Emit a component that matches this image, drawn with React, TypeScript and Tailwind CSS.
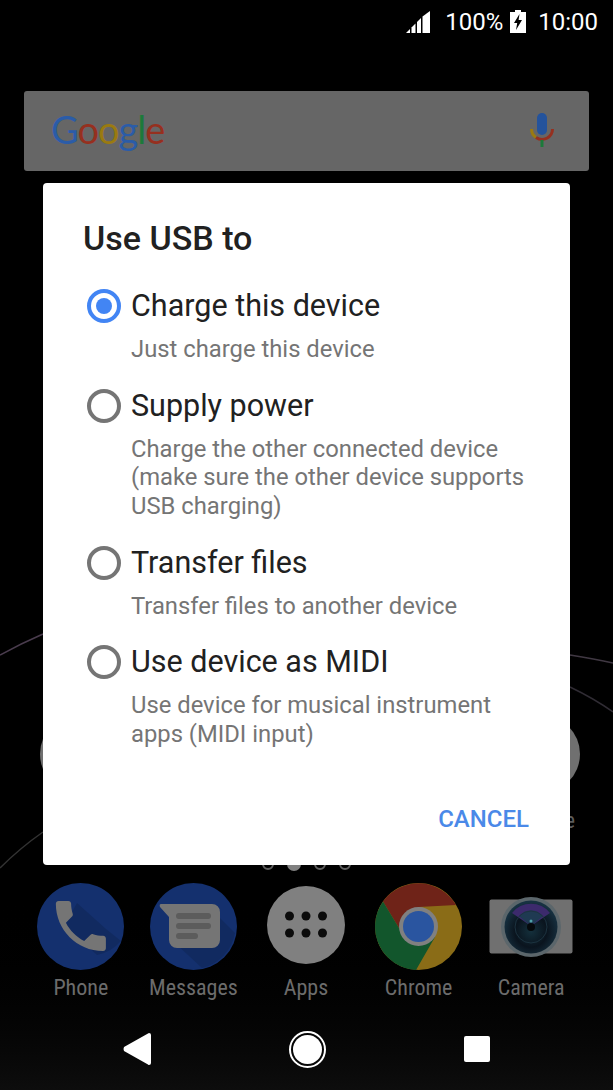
import type { ReactNode } from "react";

const options = [
  { title: "Charge this device", desc: ["Just charge this device"], checked: true },
  {
    title: "Supply power",
    desc: ["Charge the other connected device", "(make sure the other device supports", "USB charging)"],
  },
  { title: "Transfer files", desc: ["Transfer files to another device"] },
  { title: "Use device as MIDI", desc: ["Use device for musical instrument", "apps (MIDI input)"] },
];

const Signal = () => (
  <svg width="24" height="22" viewBox="0 0 24 22" fill="#fff">
    <path d="M0 22 L4 18 V22 Z" />
    <path d="M5.5 16.5 L9.5 12.5 V22 H5.5 Z" />
    <path d="M11 11 L15 7 V22 H11 Z" />
    <path d="M16.5 5.5 L24 0 V22 H16.5 Z" />
  </svg>
);

const Battery = () => (
  <svg width="16" height="23" viewBox="0 0 16 23">
    <path d="M5 0 H11 V2 H16 V23 H0 V2 H5 Z" fill="#fff" />
    <path d="M9.5 4 L4 13 H7.2 L6 20 L12 10 H8.6 Z" fill="#000" />
  </svg>
);

const StatusBar = () => (
  <div className="flex h-[43px] items-center justify-end pr-[15px] text-[24px] leading-none text-white">
    <Signal />
    <span className="ml-[15px]">100%</span>
    <span className="ml-[7px]">
      <Battery />
    </span>
    <span className="ml-[12px]">10:00</span>
  </div>
);

const SearchBar = () => (
  <div className="mx-[24px] mt-[48px] flex h-[80px] shrink-0 items-center justify-between rounded-[3px] bg-[#666666] pl-[27px] pr-[35px]">
    <span className="-mt-[4px] font-['Lato',sans-serif] text-[38px] leading-none tracking-[-1px]">
      <span className="text-[#2b5ca8]">G</span>
      <span className="text-[#96301f]">o</span>
      <span className="text-[#9a7a10]">o</span>
      <span className="text-[#2b5ca8]">g</span>
      <span className="text-[#1c7a3a]">l</span>
      <span className="text-[#96301f]">e</span>
    </span>
    <svg className="-mt-[2px]" width="24" height="34" viewBox="0 0 24 34" fill="none">
      <rect x="7" y="0" width="10" height="22" rx="5" fill="#24539c" />
      <path d="M1.5 16 A10.5 10.5 0 0 0 6 24.500" stroke="#9a7a10" strokeWidth="3" />
      <path d="M6 24.500 A10.5 10.5 0 0 0 22.500 16" stroke="#96301f" strokeWidth="3" />
      <rect x="10.500" y="27" width="3" height="7" fill="#1c7a3a" />
    </svg>
  </div>
);

const Dock = ({ children, label }: { children: ReactNode; label: string }) => (
  <div className="flex flex-col items-center">
    <div className="flex h-[87px] items-center justify-center">{children}</div>
    <span className="mt-[3px] text-[22px] leading-[30px] font-stretch-condensed text-[#6c6c6c]">{label}</span>
  </div>
);

const PhoneIcon = () => (
  <svg width="87" height="87" viewBox="0 0 87 87">
    <circle cx="43.500" cy="43.500" r="43.500" fill="#14306e" />
    <path d="M28 42 L60 72 A43.500 43.500 0 0 0 84 58 L69 46 L40 20 Z" fill="#112a60" />
    <g transform="translate(10.500 9.700) scale(2.780)" fill="#757575">
      <path d="M6.620 10.790c1.440 2.830 3.760 5.140 6.590 6.590l2.200-2.200c.27-.27.67-.36 1.020-.24 1.120.37 2.330.57 3.570.57.55 0 1 .45 1 1V20c0 .55-.45 1-1 1-9.390 0-17-7.610-17-17 0-.55.45-1 1-1h3.500c.55 0 1 .45 1 1 0 1.250.2 2.450.57 3.570.11.35.03.74-.25 1.020l-2.200 2.200z" />
    </g>
  </svg>
);

const MessagesIcon = () => (
  <svg width="87" height="87" viewBox="0 0 87 87">
    <circle cx="43.500" cy="43.500" r="43.500" fill="#14306e" />
    <path d="M25 60 L52 85 A43.500 43.500 0 0 0 85 50 L70 35 Z" fill="#112a60" />
    <path d="M11 21 H62 A8 8 0 0 1 70 29 V57 A8 8 0 0 1 62 65 H27 A8 8 0 0 1 19 57 V34 L10 24 Q9 21 11 21 Z" fill="#757575" />
    <rect x="26" y="30" width="35" height="6" rx="3" fill="#5c5c5c" />
    <rect x="26" y="40" width="35" height="6" rx="3" fill="#5c5c5c" />
    <rect x="26" y="50" width="22" height="6" rx="3" fill="#5c5c5c" />
  </svg>
);

const AppsIcon = () => (
  <svg className="mb-[4px]" width="78" height="78" viewBox="0 0 78 78">
    <circle cx="39" cy="39" r="39" fill="#808080" />
    {[22.500, 39, 55.500].map((cx) =>
      [30, 47].map((cy) => <circle key={`${cx}-${cy}`} cx={cx} cy={cy} r="4.500" fill="#0b0b0b" />),
    )}
  </svg>
);

const ChromeIcon = () => (
  <svg width="87" height="87" viewBox="0 0 87 87">
    <circle cx="43.500" cy="43.500" r="43.500" fill="#8a6c17" />
    <path d="M8 18.500 A43.500 43.500 0 0 1 81 22 L43.500 24 L27 50 Z" fill="#6f2318" />
    <path d="M8 18.500 L27 50 L60 54 L41 87 A43.500 43.500 0 0 1 8 18.500 Z" fill="#12562c" />
    <circle cx="43.500" cy="43.500" r="19.500" fill="#808080" />
    <circle cx="43.500" cy="43.500" r="15.500" fill="#2a55a0" />
  </svg>
);

const CameraIcon = () => (
  <svg width="84" height="64" viewBox="0 0 84 64">
    <defs>
      <radialGradient id="lens" cx="50%" cy="58%" r="55%">
        <stop offset="0" stopColor="#14303c" />
        <stop offset="0.55" stopColor="#0a141e" />
        <stop offset="1" stopColor="#173242" />
      </radialGradient>
    </defs>
    <rect x="0.500" y="4.500" width="83" height="54" rx="2" fill="#707070" />
    <circle cx="42" cy="32" r="30" fill="#5b666b" />
    <circle cx="42" cy="32" r="26.500" fill="url(#lens)" />
    <path d="M23 18 A24 24 0 0 1 61 18 L42 31 Z" fill="#3c2a6c" />
    <path d="M30 21 A16 16 0 0 1 54 21 L42 31 Z" fill="#1f3a52" />
    <circle cx="42" cy="32" r="16" fill="none" stroke="#1c3340" />
    <circle cx="42" cy="32" r="4" fill="#05090c" />
    <circle cx="42" cy="26" r="1.500" fill="#4fa0a8" />
  </svg>
);

const NavBar = () => (
  <div className="flex h-[87px] items-center justify-center gap-[138px] pr-[1px] pt-[5px]">
    <svg width="28" height="32" viewBox="0 0 28 32">
      <path d="M26 0 Q28 0 28 2 V30 Q28 32 26 32 Q25.500 32 25 31.500 L1 18 Q0 16 1 14 L25 0.500 Q25.500 0 26 0 Z" fill="#fff" />
    </svg>
    <div className="flex h-[37px] w-[37px] items-center justify-center rounded-full border-2 border-white">
      <div className="h-[29px] w-[29px] rounded-full bg-white" />
    </div>
    <div className="h-[26px] w-[26px] rounded-[2px] bg-white" />
  </div>
);

const UsbDialog = () => (
  <div className="absolute left-[43px] top-[183px] flex h-[682px] w-[527px] flex-col rounded-[4px] bg-white pl-[42px] pr-[40px] pt-[35px]">
    <h2 className="-ml-[2px] text-[34px] font-medium leading-[40px] text-[#212121]">Use USB to</h2>
    <div className="mt-[28px] flex flex-col gap-[22.300px]">
      {options.map((opt) => (
        <div key={opt.title} className="flex gap-[8px]">
          <div className="flex h-[40px] w-[38px] shrink-0 items-center justify-center">
            <div
              className={
                opt.checked
                  ? "flex h-[34px] w-[34px] items-center justify-center rounded-full border-[4px] border-[#4285f4]"
                  : "h-[34px] w-[34px] rounded-full border-[4px] border-[#757575]"
              }
            >
              {opt.checked && <div className="h-[16px] w-[16px] rounded-full bg-[#4285f4]" />}
            </div>
          </div>
          <div className="flex flex-col">
            <span className="text-[30.500px] leading-[40px] text-[#212121]">{opt.title}</span>
            <div className="mt-[9px] text-[23.800px] leading-[28.500px] text-[#757575]">
              {opt.desc.map((line) => (
                <div key={line} className="whitespace-nowrap">
                  {line}
                </div>
              ))}
            </div>
          </div>
        </div>
      ))}
    </div>
    <button className="absolute bottom-[31px] right-[41px] text-[24px] font-medium leading-[30px] text-[#4a89e8]">
      CANCEL
    </button>
  </div>
);

export default function App() {
  return (
    <div className="relative flex h-[1090px] w-[613px] flex-col overflow-hidden bg-black font-['Roboto',sans-serif]">
      {/* wallpaper streaks */}
      <svg className="absolute inset-0" width="613" height="1090" viewBox="0 0 613 1090" fill="none">
        <path d="M0 655 Q20 644 43 634" stroke="#4a3c4e" strokeWidth="1.500" />
        <path d="M0 868 Q20 848 43 832" stroke="#333333" strokeWidth="1.500" />
        <path d="M570 655 Q595 659 613 663" stroke="#403843" strokeWidth="1.500" />
        <path d="M570 687 Q595 699 613 712" stroke="#302c34" strokeWidth="1.500" />
      </svg>

      <div className="relative flex flex-1 flex-col">
        <StatusBar />
        <SearchBar />
        <div className="flex flex-1 flex-col justify-end">
          <div className="flex items-start justify-between pl-[40px] pr-[33px]">
            <div className="h-[78px] w-[78px] rounded-full bg-[#707070]" />
            <div className="flex w-[78px] flex-col items-end">
              <div className="h-[78px] w-[78px] rounded-full bg-[#707070]" />
              <span className="mr-[5px] mt-[13px] text-[22px] leading-[30px] font-stretch-condensed text-[#5c5c5c]">Store</span>
            </div>
          </div>
          <div className="mb-[12px] mt-[21px] flex items-center justify-center gap-[13px] pr-[1px]">
            <div className="h-[12px] w-[12px] rounded-full border-2 border-[#606060]" />
            <div className="h-[14px] w-[14px] rounded-full bg-[#808080]" />
            <div className="h-[12px] w-[12px] rounded-full border-2 border-[#606060]" />
            <div className="h-[12px] w-[12px] rounded-full border-2 border-[#606060]" />
          </div>
        </div>
      </div>

      <div className="relative bg-gradient-to-b from-black to-[#0d0d0d]">
        <div className="grid grid-cols-5 pl-[24.500px] pr-[25.500px]">
          <Dock label="Phone">
            <PhoneIcon />
          </Dock>
          <Dock label="Messages">
            <MessagesIcon />
          </Dock>
          <Dock label="Apps">
            <AppsIcon />
          </Dock>
          <Dock label="Chrome">
            <ChromeIcon />
          </Dock>
          <Dock label="Camera">
            <CameraIcon />
          </Dock>
        </div>
        <NavBar />
      </div>

      <UsbDialog />
    </div>
  );
}
